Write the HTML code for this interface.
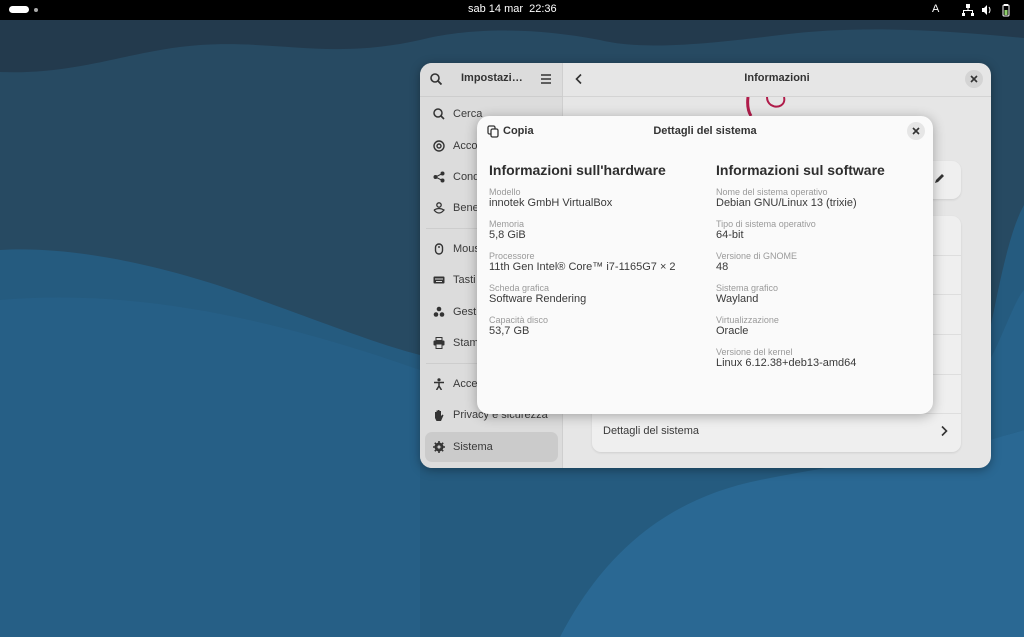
<!DOCTYPE html>
<html><head><meta charset="utf-8"><style>
*{margin:0;padding:0;box-sizing:border-box}
body{width:1024px;height:637px;overflow:hidden;position:relative;font-family:"Liberation Sans","DejaVu Sans",sans-serif;background:#264a63}
.abs{position:absolute}
.top{left:0;top:0;width:1024px;height:20px;background:#000;color:#fff;font-size:11px}
.win{left:420px;top:63px;width:571px;height:405px;border-radius:12px;overflow:hidden;background:#e6e6e6;box-shadow:0 2px 10px rgba(0,0,0,.35)}
.side{left:0;top:0;width:143px;height:405px;background:#dcdcdc;border-right:1px solid #cfcfcf}
.si{position:absolute;left:13px;font-size:11px;color:#3a3a3a;display:flex;align-items:center;gap:8px}
.ic{width:12px;height:12px;display:inline-block}
.dlg{left:477px;top:116px;width:456px;height:298px;background:#fafafa;border-radius:12px;box-shadow:0 2px 12px rgba(0,0,0,.3)}
.h{font-weight:bold;font-size:14px;color:#2e2e2e;position:absolute}
.l{font-size:9px;color:#9a9a9a;position:absolute}
.v{font-size:11px;color:#3a3a3a;position:absolute}
</style></head><body>
<svg class="abs" style="left:0;top:0" width="1024" height="637">
<rect width="1024" height="637" fill="#274a62"/>
<path d="M0 20 L1024 20 L1024 38 C940 30 860 25 780 35 C700 45 640 50 600 40 C520 25 460 30 420 40 C330 60 280 40 200 45 C130 50 80 75 0 72Z" fill="#233a4d"/>
<path d="M0 250 C80 245 180 270 260 300 C330 325 380 345 420 355 L990 330 C1000 280 1010 230 1024 205 L1024 637 L0 637Z" fill="#255b7f"/>
<path d="M0 300 C120 290 250 310 420 370 L420 637 L0 637Z" fill="#265f86"/>
<path d="M560 637 C600 560 660 500 760 480 C860 460 960 450 1024 430 L1024 637Z" fill="#2a6893"/>
<path d="M990 360 C1005 330 1015 300 1024 290 L1024 430 L990 440Z" fill="#27628a"/>
</svg>
<div class="abs top">
<div class="abs" style="left:9px;top:6px;width:20px;height:7px;border-radius:4px;background:#fff"></div>
<div class="abs" style="left:34px;top:8px;width:4px;height:4px;border-radius:2px;background:#aaa"></div>
<div class="abs" style="left:468px;top:3px;font-size:11px">sab 14 mar&nbsp; 22:36</div>
<div class="abs" style="left:932px;top:3px;font-size:11px">A</div>
<svg class="abs" style="left:962px;top:3px" width="52" height="14"><g fill="#fff"><rect x="4" y="1" width="4" height="4"/><rect x="5.5" y="5" width="1" height="3"/><rect x="1" y="7" width="10" height="1"/><rect x="1" y="8" width="1" height="2"/><rect x="10" y="8" width="1" height="2"/><rect x="0" y="10" width="3" height="3"/><rect x="9" y="10" width="3" height="3"/><path d="M20 5h2l3-3v10l-3-3h-2z"/><path d="M27 4q2 3 0 6" stroke="#fff" fill="none"/><rect x="42" y="1" width="4" height="2"/><rect x="41" y="2" width="6" height="11" rx="1" fill="none" stroke="#fff"/><rect x="42.5" y="7" width="3" height="5" fill="#8fce6a"/></g></svg>
</div>
<div class="abs win">
<div class="abs side">
<svg class="abs" style="left:10px;top:10px" width="12" height="12"><circle cx="5" cy="5" r="4" fill="none" stroke="#333" stroke-width="1.6"/><path d="M8 8l3.5 3.5" stroke="#333" stroke-width="1.8"/></svg>
<div class="abs" style="left:41px;top:9px;font-size:11px;font-weight:bold;color:#333">Impostazi…</div>
<svg class="abs" style="left:120px;top:10px" width="12" height="12"><path d="M1 2h10M1 6h10M1 10h10" stroke="#333" stroke-width="1.5"/></svg>
<div class="abs" style="left:0;top:33px;width:143px;height:1px;background:#cdcdcd"></div>
<div class="si" style="top:45px"><svg class="ic"><circle cx="5" cy="5" r="4" fill="none" stroke="#333" stroke-width="1.5"/><path d="M8 8l3 3" stroke="#333" stroke-width="1.6"/></svg>Cerca</div>
<div class="si" style="top:77px"><svg class="ic"><circle cx="6" cy="6" r="5" fill="none" stroke="#333" stroke-width="1.4"/><circle cx="6" cy="6" r="2" fill="none" stroke="#333" stroke-width="1.4"/></svg>Acco</div>
<div class="si" style="top:108px"><svg class="ic"><circle cx="2.5" cy="6" r="2" fill="#333"/><circle cx="9.5" cy="2.5" r="2" fill="#333"/><circle cx="9.5" cy="9.5" r="2" fill="#333"/><path d="M2.5 6L9.5 2.5M2.5 6L9.5 9.5" stroke="#333"/></svg>Cond</div>
<div class="si" style="top:139px"><svg class="ic"><circle cx="6" cy="3" r="2.2" fill="none" stroke="#333" stroke-width="1.3"/><path d="M1 8q5-3 10 0q-5 6-10 0" fill="none" stroke="#333" stroke-width="1.3"/></svg>Bene</div>
<div class="abs" style="left:6px;top:165px;width:137px;height:1px;background:#cdcdcd"></div>
<div class="si" style="top:180px"><svg class="ic"><rect x="2.5" y="1" width="7" height="10" rx="3.5" fill="none" stroke="#333" stroke-width="1.4"/><path d="M6 3v2" stroke="#333" stroke-width="1.4"/></svg>Mous</div>
<div class="si" style="top:211px"><svg class="ic"><rect x="0.5" y="2.5" width="11" height="7" rx="1" fill="#333"/><path d="M2 5h8M3 7.5h6" stroke="#ddd"/></svg>Tasti</div>
<div class="si" style="top:243px"><svg class="ic"><circle cx="6" cy="3" r="2.3" fill="#333"/><circle cx="3" cy="8.5" r="2.3" fill="#333"/><circle cx="9" cy="8.5" r="2.3" fill="#333"/></svg>Gesti</div>
<div class="si" style="top:274px"><svg class="ic"><rect x="3" y="0.5" width="6" height="3" fill="none" stroke="#333"/><rect x="0.5" y="3.5" width="11" height="5" rx="1" fill="#333"/><rect x="3" y="7" width="6" height="4.5" fill="#ddd" stroke="#333"/></svg>Stam</div>
<div class="abs" style="left:6px;top:300px;width:137px;height:1px;background:#cdcdcd"></div>
<div class="si" style="top:315px"><svg class="ic"><circle cx="6" cy="1.8" r="1.6" fill="#333"/><path d="M1 4.5h10M6 4v4M6 8l-2.5 4M6 8l2.5 4" stroke="#333" stroke-width="1.5" fill="none"/></svg>Acce</div>
<div class="si" style="top:346px"><svg class="ic"><path d="M2 6V3h1.5v3V1.5h1.5V6V1h1.5v5V2h1.5v5l1.5-1.5 1 .8L8 12H3.5L2 9z" fill="#333"/></svg>Privacy e sicurezza</div>
<div class="abs" style="left:5px;top:369px;width:133px;height:30px;border-radius:7px;background:#cbcbcb"></div>
<div class="si" style="top:378px"><svg class="ic"><circle cx="6" cy="6" r="3.5" fill="none" stroke="#333" stroke-width="2"/><path d="M6 0v12M0 6h12M1.8 1.8l8.4 8.4M10.2 1.8l-8.4 8.4" stroke="#333" stroke-width="1.6"/><circle cx="6" cy="6" r="1.6" fill="#cbcbcb"/></svg>Sistema</div>
</div>
<svg class="abs" style="left:154px;top:10px" width="10" height="12"><path d="M7 1.5L2.5 6 7 10.5" stroke="#333" stroke-width="1.6" fill="none"/></svg>
<div class="abs" style="left:143px;top:9px;width:428px;text-align:center;font-size:11px;font-weight:bold;color:#333">Informazioni</div>
<div class="abs" style="left:545px;top:7px;width:18px;height:18px;border-radius:9px;background:#d4d4d4"></div>
<svg class="abs" style="left:550px;top:12px" width="8" height="8"><path d="M1 1l6 6M7 1l-6 6" stroke="#333" stroke-width="1.6"/></svg>
<div class="abs" style="left:143px;top:33px;width:428px;height:1px;background:#d4d4d4"></div>
<svg class="abs" style="left:320px;top:34px" width="70" height="30"><path d="M8 0c-1 8 0 14 3 19" stroke="#b01c4a" stroke-width="3" fill="none"/><path d="M44 0c2 8-6 12-13 8-3-2-4-5-4-8" stroke="#b01c4a" stroke-width="2" fill="none"/></svg>
<div class="abs" style="left:172px;top:98px;width:369px;height:38px;background:#efefef;border-radius:9px;box-shadow:0 1px 2px rgba(0,0,0,.1)"></div>
<svg class="abs" style="left:513px;top:110px" width="12" height="12"><path d="M2 10l1-3 6-6 2 2-6 6z" fill="#333"/></svg>
<div class="abs" style="left:172px;top:153px;width:369px;height:236px;background:#efefef;border-radius:9px;box-shadow:0 1px 2px rgba(0,0,0,.1)"></div>
<div class="abs" style="left:172px;top:192px;width:369px;height:1px;background:#dedede"></div>
<div class="abs" style="left:172px;top:231px;width:369px;height:1px;background:#dedede"></div>
<div class="abs" style="left:172px;top:271px;width:369px;height:1px;background:#dedede"></div>
<div class="abs" style="left:172px;top:311px;width:369px;height:1px;background:#dedede"></div>
<div class="abs" style="left:172px;top:350px;width:369px;height:1px;background:#dedede"></div>
<div class="abs" style="left:183px;top:362px;font-size:11px;color:#3a3a3a">Dettagli del sistema</div>
<svg class="abs" style="left:520px;top:362px" width="8" height="12"><path d="M2 1.5L6.5 6 2 10.5" stroke="#333" stroke-width="1.6" fill="none"/></svg>
</div>
<div class="abs dlg">
<svg class="abs" style="left:10px;top:9px" width="12" height="13"><rect x="1" y="1" width="7" height="8" rx="1.5" fill="none" stroke="#333" stroke-width="1.3"/><rect x="4" y="4" width="7" height="8" rx="1.5" fill="#fafafa" stroke="#333" stroke-width="1.3"/></svg>
<div class="abs" style="left:26px;top:9px;font-size:11px;font-weight:bold;color:#333">Copia</div>
<div class="abs" style="left:0;top:9px;width:456px;text-align:center;font-size:11px;font-weight:bold;color:#333">Dettagli del sistema</div>
<div class="abs" style="left:430px;top:6px;width:18px;height:18px;border-radius:9px;background:#e6e6e6"></div>
<svg class="abs" style="left:435px;top:11px" width="8" height="8"><path d="M1 1l6 6M7 1l-6 6" stroke="#333" stroke-width="1.6"/></svg>
<div class="h" style="left:12px;top:46px">Informazioni sull'hardware</div>
<div class="h" style="left:239px;top:46px">Informazioni sul software</div>
<div class="l" style="left:12px;top:71px">Modello</div><div class="v" style="left:12px;top:81px">innotek GmbH VirtualBox</div>
<div class="l" style="left:12px;top:103px">Memoria</div><div class="v" style="left:12px;top:113px">5,8 GiB</div>
<div class="l" style="left:12px;top:135px">Processore</div><div class="v" style="left:12px;top:145px">11th Gen Intel® Core™ i7-1165G7 × 2</div>
<div class="l" style="left:12px;top:167px">Scheda grafica</div><div class="v" style="left:12px;top:177px">Software Rendering</div>
<div class="l" style="left:12px;top:199px">Capacità disco</div><div class="v" style="left:12px;top:209px">53,7 GB</div>
<div class="l" style="left:239px;top:71px">Nome del sistema operativo</div><div class="v" style="left:239px;top:81px">Debian GNU/Linux 13 (trixie)</div>
<div class="l" style="left:239px;top:103px">Tipo di sistema operativo</div><div class="v" style="left:239px;top:113px">64-bit</div>
<div class="l" style="left:239px;top:135px">Versione di GNOME</div><div class="v" style="left:239px;top:145px">48</div>
<div class="l" style="left:239px;top:167px">Sistema grafico</div><div class="v" style="left:239px;top:177px">Wayland</div>
<div class="l" style="left:239px;top:199px">Virtualizzazione</div><div class="v" style="left:239px;top:209px">Oracle</div>
<div class="l" style="left:239px;top:231px">Versione del kernel</div><div class="v" style="left:239px;top:241px">Linux 6.12.38+deb13-amd64</div>
</div>
</body></html>
